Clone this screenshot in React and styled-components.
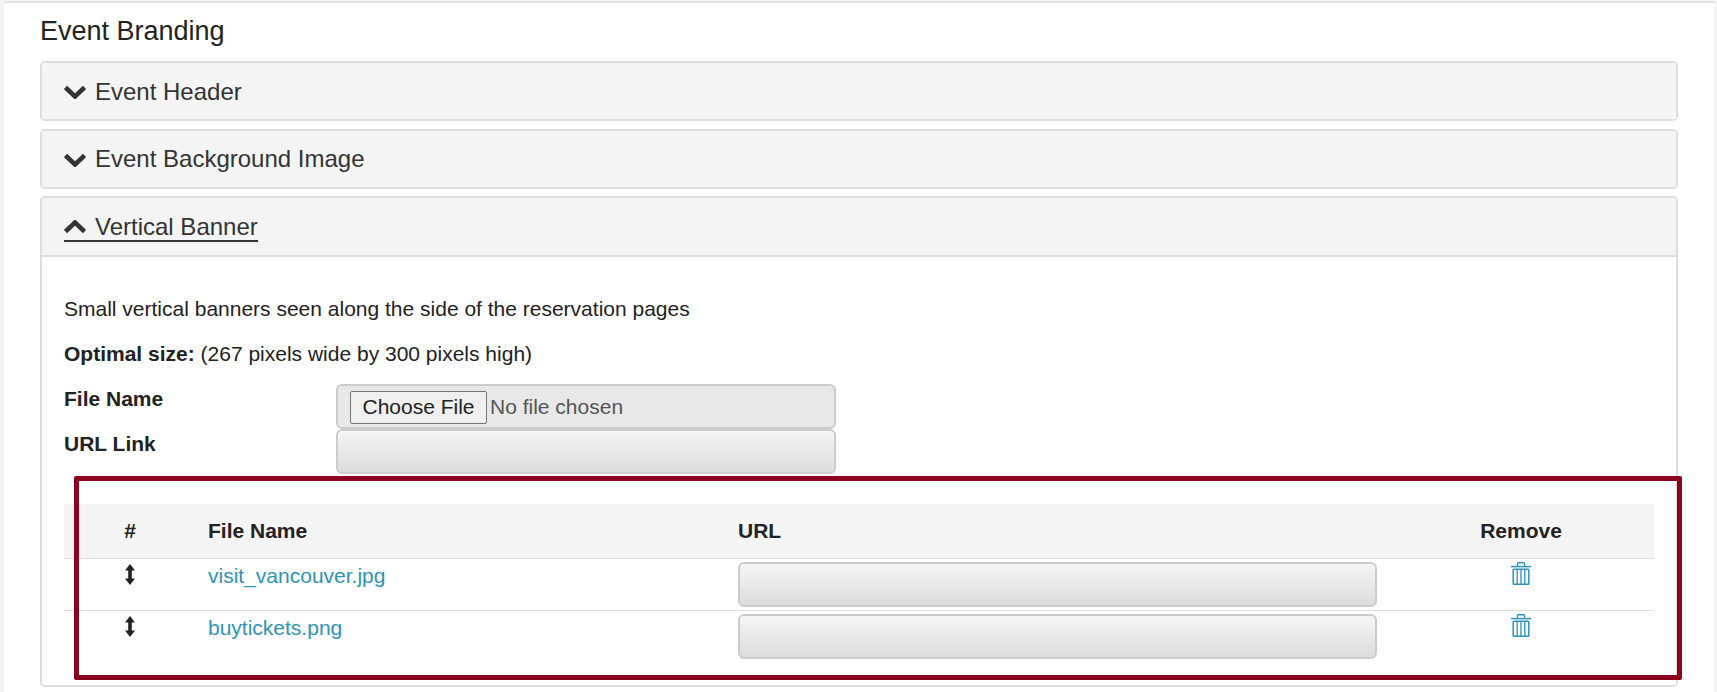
import React from "react";
import styled, { createGlobalStyle } from "styled-components";

const Global = createGlobalStyle`
  html, body { margin: 0; padding: 0; background: #f4f4f4; }
  body { font-family: "Liberation Sans", Arial, sans-serif; color: #222; overflow: hidden; }
  * { box-sizing: border-box; }
`;

const Page = styled.div`
  margin: 1px 3px 0 4px;
  height: 691px;
  background: #fff;
  border-top: 2px solid #e2e2e2;
  padding: 0 36px 0 36px;
`;
const Title = styled.h2`
  margin: 0;
  padding-top: 13px;
  height: 58px;
  font-size: 27px;
  line-height: 30px;
  font-weight: 400;
  color: #222;
`;
const Panel = styled.section`
  border: 2px solid #ddd;
  border-radius: 5px;
  background: #fff;
  margin-bottom: 7.5px;
  width: 1638px;
`;
const PanelHeader = styled.div`
  height: ${(p) => (p.$open ? 59 : 56)}px;
  display: flex;
  align-items: center;
  padding: 1px 0 0 22px;
  background: #f4f4f4;
  color: #333;
  font-size: 24px;
  border-radius: 3px 3px 0 0;
  border-bottom: ${(p) => (p.$open ? "2px solid #ddd" : "0")};
`;
const HeaderLabel = styled.span`
  display: flex;
  align-items: center;
  gap: 9px;
  border-bottom: ${(p) => (p.$open ? "2px solid #333" : "0")};
  line-height: 26px;
  margin-top: ${(p) => (p.$open ? "2px" : "0")};
`;
const PanelBody = styled.div`
  position: relative;
  height: 428px;
  padding: 40px 22px 0;
  font-size: 21px;
`;
const Line = styled.p`
  margin: 0 0 ${(p) => p.$after}px;
  height: 24px;
  line-height: 24px;
`;
const FormRow = styled.div`
  display: flex;
  height: 45px;
`;
const FormLabel = styled.label`
  width: 272px;
  font-weight: 700;
  padding-top: 3px;
  line-height: 24px;
`;
const FileBox = styled.div`
  width: 500px;
  height: 45px;
  display: flex;
  align-items: center;
  padding: 1px 0 0 12px;
  background: #e8e8e8;
  border: 2px solid #ccc;
  border-radius: 6px;
  color: #555;
`;
const FileButton = styled.button`
  width: 137px;
  height: 33px;
  padding: 0;
  margin-right: 3px;
  font: inherit;
  color: #222;
  background: #efefef;
  border: 1px solid #767676;
  border-radius: 2px;
`;
const TextInput = styled.input`
  display: block;
  width: ${(p) => p.$width}px;
  height: 45px;
  background: linear-gradient(#f5f5f5, #dcdcdc);
  border: 2px solid #ccc;
  border-radius: 6px;
`;
const Table = styled.table`
  border-collapse: collapse;
  table-layout: fixed;
  width: 1590px;
  margin-top: 30px;
  font-size: 21px;
`;
const Th = styled.th`
  width: ${(p) => p.$width}px;
  height: 54px;
  padding: 0 ${(p) => p.$right ?? 10}px 0 10px;
  background: #f4f4f4;
  color: #222;
  font-weight: 700;
  text-align: ${(p) => (p.$center ? "center" : "left")};
`;
const Tr = styled.tr`
  border-top: 1px solid #ddd;
`;
const Td = styled.td`
  height: 52px;
  padding: ${(p) => p.$pad ?? 3}px ${(p) => p.$right ?? 10}px 0 10px;
  vertical-align: top;
  text-align: ${(p) => (p.$center ? "center" : "left")};
  line-height: 26px;
`;
const FileLink = styled.a`
  color: #2e93b5;
  text-decoration: none;
`;
const IconLink = styled.a`
  display: inline-block;
  color: #2e93b5;
  line-height: 0;
`;
const Glyph = styled.svg`
  display: block;
  margin: 0 auto;
`;
const Highlight = styled.div`
  position: absolute;
  left: 32px;
  top: 219px;
  width: 1608px;
  height: 204px;
  border: 5px solid #8b001e;
  border-radius: 2px;
  pointer-events: none;
`;

const Chevron = ({ up }) => (
  <Glyph width="22" height="15" viewBox="0 0 22 15">
    <path
      d={up ? "M1.5 11.5 L11 2.5 L20.5 11.5" : "M1.5 3.5 L11 12.5 L20.5 3.5"}
      fill="none"
      stroke="#333"
      strokeWidth="4.6"
      strokeLinejoin="miter"
    />
  </Glyph>
);
const Resize = () => (
  <Glyph width="10" height="21" viewBox="0 0 10 21">
    <path d="M5 0 L10 6.5 H6.8 V14.5 H10 L5 21 L0 14.5 H3.2 V6.5 H0 Z" fill="#222" />
  </Glyph>
);
const Trash = () => (
  <Glyph width="20" height="23" viewBox="0 0 20 23">
    <path d="M6.5 4 V1.5 Q6.5 .7 7.5 .7 H12.5 Q13.5 .7 13.5 1.5 V4" fill="none" stroke="currentColor" strokeWidth="1.4" />
    <path d="M0 4.6 H20" stroke="currentColor" strokeWidth="1.5" />
    <rect x="2.2" y="7.2" width="15.6" height="15" rx=".8" fill="none" stroke="currentColor" strokeWidth="1.5" />
    <path d="M6.2 8 V22 M10 8 V22 M13.8 8 V22" stroke="currentColor" strokeWidth="1.3" />
  </Glyph>
);

const Accordion = ({ title, open, children }) => (
  <Panel>
    <PanelHeader $open={open}>
      <HeaderLabel $open={open}>
        <Chevron up={open} />
        <span>{title}</span>
      </HeaderLabel>
    </PanelHeader>
    {children}
  </Panel>
);

const rows = [{ name: "visit_vancouver.jpg" }, { name: "buytickets.png" }];

export default function App() {
  return (
    <>
      <Global />
      <Page>
        <Title>Event Branding</Title>
        <Accordion title="Event Header" />
        <Accordion title="Event Background Image" />
        <Accordion title="Vertical Banner" open>
          <PanelBody>
            <Line $after={21}>Small vertical banners seen along the side of the reservation pages</Line>
            <Line $after={18}>
              <b>Optimal size:</b> (267 pixels wide by 300 pixels high)
            </Line>
            <FormRow>
              <FormLabel>File Name</FormLabel>
              <FileBox>
                <FileButton type="button">Choose File</FileButton>
                <span>No file chosen</span>
              </FileBox>
            </FormRow>
            <FormRow>
              <FormLabel>URL Link</FormLabel>
              <TextInput $width={500} />
            </FormRow>
            <Table>
              <thead>
                <tr>
                  <Th $width={134} $right={12} $center>#</Th>
                  <Th $width={530}>File Name</Th>
                  <Th $width={660}>URL</Th>
                  <Th $width={266} $center>Remove</Th>
                </tr>
              </thead>
              <tbody>
                {rows.map((r) => (
                  <Tr key={r.name}>
                    <Td $center $right={12} $pad={5}><Resize /></Td>
                    <Td $pad={4}><FileLink href="#">{r.name}</FileLink></Td>
                    <Td $pad={3}><TextInput $width={639} /></Td>
                    <Td $center $pad={3}>
                      <IconLink href="#"><Trash /></IconLink>
                    </Td>
                  </Tr>
                ))}
              </tbody>
            </Table>
            <Highlight />
          </PanelBody>
        </Accordion>
      </Page>
    </>
  );
}
